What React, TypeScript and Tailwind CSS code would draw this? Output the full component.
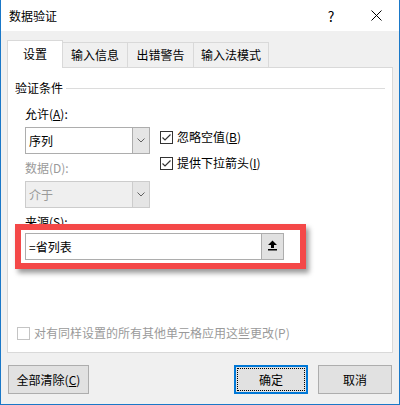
import React from 'react'

const Check: React.FC<{ checked?: boolean; disabled?: boolean }> = ({ checked, disabled }) => (
  <span
    className={`w-[13px] h-[13px] shrink-0 border bg-white flex items-center justify-center ${
      disabled ? 'border-[#c4c4c4]' : 'border-[#333333]'
    }`}
  >
    {checked && (
      <svg width="11" height="11" viewBox="0 0 11 11">
        <polyline points="1.5,5.5 4,8 9.5,2.5" fill="none" stroke="#333" strokeWidth="1.2" />
      </svg>
    )}
  </span>
)

const Chevron: React.FC = () => (
  <svg width="8" height="5" viewBox="0 0 8 5">
    <polyline points="0.5,0.5 4,4 7.5,0.5" fill="none" stroke="#606060" strokeWidth="1" />
  </svg>
)

const Select: React.FC<{ value: string; disabled?: boolean }> = ({ value, disabled }) => (
  <div
    className={`w-[125px] h-[27px] border flex ${
      disabled ? 'border-[#cccccc] bg-[#efefef] text-[#9a9a9a]' : 'border-[#adadad] bg-white text-black'
    }`}
  >
    <div className="flex-1 flex items-center pl-[3px]">{value}</div>
    <div
      className={`w-[17px] flex items-center justify-center border-l ${
        disabled ? 'bg-[#e5e5e5] border-[#cccccc]' : 'bg-[#e5e5e5] border-[#adadad]'
      }`}
    >
      <Chevron />
    </div>
  </div>
)

const Button: React.FC<{ children: React.ReactNode; w: string; focused?: boolean }> = ({ children, w, focused }) => (
  <button
    className={`relative h-[29px] ${w} bg-[#e1e1e1] flex items-center justify-center ${
      focused ? 'border-2 border-[#0078d7]' : 'border border-[#adadad]'
    }`}
  >
    {focused && <span className="absolute inset-[1px] border border-dotted border-black" />}
    {children}
  </button>
)

const App: React.FC = () => {
  return (
    <div className="w-[400px] h-[405px] flex flex-col bg-[#f0f0f0] border-x border-b border-[#1a78c8] text-[12px] leading-[16px] text-black font-['Noto_Sans_CJK_SC',sans-serif] overflow-hidden">
      {/* Title bar */}
      <div className="h-[31px] bg-white flex items-center shrink-0">
        <span className="pl-[8px] flex-1">数据验证</span>
        <div className="w-[46px] h-full flex items-center justify-center text-[14px]">?</div>
        <div className="w-[45px] h-full flex items-center justify-center">
          <svg width="11" height="11" viewBox="0 0 11 11">
            <path d="M0.5 0.5L10.5 10.5M10.5 0.5L0.5 10.5" stroke="#000" strokeWidth="1" />
          </svg>
        </div>
      </div>

      {/* Tabs */}
      <div className="flex items-end h-[27px] mt-[9px] pl-[6px]">
        <div className="relative z-10 h-[28px] -mb-px w-[56px] bg-white border-l border-t border-r border-[#d9d9d9] flex items-center justify-center pb-[2px]">
          设置
        </div>
        <div className="h-[25px] w-[65px] border-t border-r border-[#d9d9d9] flex items-center justify-center">
          输入信息
        </div>
        <div className="h-[25px] w-[66px] border-t border-r border-[#d9d9d9] flex items-center justify-center">
          出错警告
        </div>
        <div className="h-[25px] w-[75px] border-t border-r border-[#d9d9d9] flex items-center justify-center">
          输入法模式
        </div>
      </div>

      {/* Panel */}
      <div className="mx-[6px] h-[286px] bg-white border border-[#d9d9d9] flex flex-col">
        <div className="flex items-center mt-[12px] pl-[7px] pr-[7px]">
          <span>验证条件</span>
          <div className="flex-1 h-px bg-[#dcdcdc] ml-[3px]" />
        </div>

        <div className="flex pl-[17px] mt-[10px]">
          <div className="flex flex-col">
            <span>
              允许(<span className="underline">A</span>):
            </span>
            <div className="mt-[5px]">
              <Select value="序列" />
            </div>
            <span className="mt-[6px] text-[#9a9a9a]">数据(D):</span>
            <div className="mt-[5px]">
              <Select value="介于" disabled />
            </div>
          </div>
          <div className="flex flex-col ml-[10px] pt-[23px] gap-[10px]">
            <label className="flex items-center gap-[4px]">
              <Check checked />
              <span>
                忽略空值(<span className="underline">B</span>)
              </span>
            </label>
            <label className="flex items-center gap-[4px]">
              <Check checked />
              <span>
                提供下拉箭头(<span className="underline">I</span>)
              </span>
            </label>
          </div>
        </div>

        <div className="pl-[17px] mt-[6px] flex flex-col">
          <span>
            来源(<span className="underline">S</span>):
          </span>
          <div className="relative mt-[3px] w-[259px] h-[27px]">
            <div className="w-full h-full border border-[#adadad] bg-white flex">
              <div className="flex-1 flex items-center pl-[3px]">=省列表</div>
              <div className="w-[22px] bg-[#e1e1e1] border-l border-[#adadad] flex items-center justify-center pb-[3px]">
                <svg width="11" height="11" viewBox="0 0 11 11">
                  <path d="M5.5 0.5L10 5H7V8H4V5H1Z" fill="#000" />
                  <rect x="1" y="9" width="9" height="1.5" fill="#000" />
                </svg>
              </div>
            </div>
            {/* annotation box */}
            <div className="absolute left-[-10px] top-[-9px] w-[291px] h-[45px] border-[6px] border-[#f44848] shadow-[3px_4px_5px_rgba(0,0,0,0.4)]" />
          </div>
        </div>

        <label className="flex items-center gap-[4px] pl-[9px] mt-[65px] text-[#9a9a9a]">
          <Check disabled />
          <span>对有同样设置的所有其他单元格应用这些更改(P)</span>
        </label>
      </div>

      {/* Buttons */}
      <div className="flex mt-[12px] pl-[7px] pr-[7px]">
        <Button w="w-[81px]">
          全部清除(<span className="underline">C</span>)
        </Button>
        <div className="flex-1" />
        <Button w="w-[74px]" focused>
          确定
        </Button>
        <div className="w-[10px]" />
        <Button w="w-[74px]">取消</Button>
      </div>
    </div>
  )
}

export default App
